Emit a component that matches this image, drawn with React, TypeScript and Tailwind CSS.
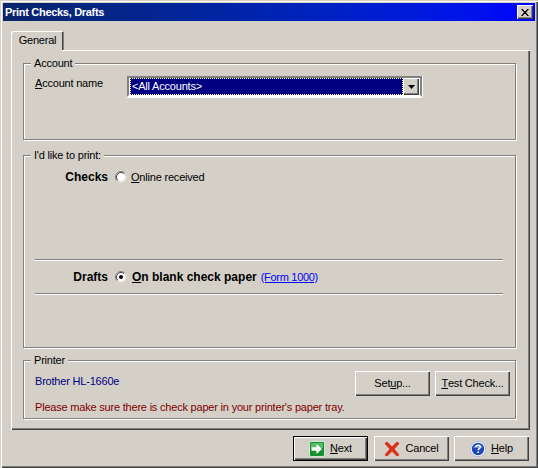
const sans = "font-['Liberation_Sans',Arial,sans-serif]";

const GroupBox = ({ label, className, children }: { label: string; className: string; children?: React.ReactNode }) => (
    <div className={`relative border border-[#808080] shadow-[inset_1px_1px_0_#fff,1px_1px_0_#fff] ${className}`}>
        <span className="absolute left-[7px] top-[-8px] bg-[#d4d0c8] px-[3px] leading-[14px] text-black">{label}</span>
        {children}
    </div>
);

const Etched = () => <div className="h-[1px] bg-[#808080] shadow-[0_1px_0_#fff]" />;

const Radio = ({ checked }: { checked?: boolean }) => (
    <svg width="12" height="12" viewBox="0 0 12 12" className="shrink-0">
        <circle cx="6" cy="6" r="5.5" fill="#ffffff" />
        <path d="M2.1 9.9 A5.5 5.5 0 0 1 9.9 2.1" fill="none" stroke="#808080" strokeWidth="1" />
        <path d="M2.8 9.2 A4.5 4.5 0 0 1 9.2 2.8" fill="none" stroke="#404040" strokeWidth="1" />
        <path d="M3 10 A5 5 0 0 0 10 3" fill="none" stroke="#d4d0c8" strokeWidth="1" />
        {checked && <circle cx="6" cy="6" r="2" fill="#000000" />}
    </svg>
);

const Button = ({ className, children, isDefault }: { className: string; children: React.ReactNode; isDefault?: boolean }) => (
    <div className={`flex items-center justify-center bg-[#d4d0c8] text-black ${isDefault ? 'border border-black shadow-[inset_1px_1px_0_#fff,inset_-1px_-1px_0_#404040,inset_-2px_-2px_0_#808080]' : 'shadow-[inset_1px_1px_0_#fff,inset_-1px_-1px_0_#404040,inset_-2px_-2px_0_#808080]'} ${className}`}>
        {children}
    </div>
);

const NextIcon = () => (
    <svg width="16" height="16" viewBox="0 0 16 16">
        <rect x="0.5" y="0.5" width="15" height="15" rx="1.5" fill="#14902c" stroke="#cfe8d2" />
        <rect x="2" y="2" width="12" height="5" fill="#5cb86c" />
        <path d="M2.5 6.2h5V3l5.5 5-5.5 5V9.8h-5z" fill="#ffffff" />
    </svg>
);

const CancelIcon = () => (
    <svg width="16" height="16" viewBox="0 0 16 16">
        <path d="M0.5 2.5 3 0.5 8 5.5 13 0.5 15.5 2.5 10.5 8 15.5 14 13 15.5 8 10.5 3 15.5 0.5 14 5.5 8z" fill="#d9301c" />
    </svg>
);

const HelpIcon = () => (
    <svg width="16" height="16" viewBox="0 0 16 16">
        <circle cx="8" cy="8" r="7.6" fill="#ffffff" stroke="#9fb4e6" strokeWidth="0.8" />
        <circle cx="8" cy="8" r="6.2" fill="#1e46b4" />
        <path d="M3.2 7a5 5 0 0 1 9.6 0z" fill="#5f86e0" />
        <path d="M5.8 6.2c.2-1.4 1.2-2 2.3-2 1.3 0 2.2.8 2.2 1.8 0 1.6-2.1 1.6-2.1 3.3" fill="none" stroke="#ffffff" strokeWidth="1.5" />
        <rect x="7.3" y="10.4" width="1.6" height="1.6" fill="#ffffff" />
    </svg>
);

const App = () => {
    return (
        <div className={`flex h-[468px] w-[538px] flex-col overflow-hidden bg-[#d4d0c8] text-[11px] tracking-[-0.2px] text-black shadow-[inset_1px_1px_0_#d4d0c8,inset_2px_2px_0_#fff,inset_-1px_-1px_0_#404040,inset_-2px_-2px_0_#808080] ${sans}`}>
            {/* title bar */}
            <div className="mx-[3px] mt-[3px] flex h-[18px] shrink-0 items-center justify-between bg-gradient-to-r from-[#0a246a] to-[#0000ff] pl-[2px] pr-[2px]">
                <span className="text-[11px] font-bold tracking-[-0.3px] text-white">Print Checks, Drafts</span>
                <div className="flex h-[14px] w-[16px] items-center justify-center bg-[#d4d0c8] shadow-[inset_1px_1px_0_#fff,inset_-1px_-1px_0_#404040,inset_-2px_-2px_0_#808080]">
                    <svg width="8" height="7" viewBox="0 0 8 7"><path d="M0 0h2v1h1v1h2V1h1V0h2L5 3.5 8 7H6V6H5V5H3v1H2v1H0l3-3.5z" fill="#000" /></svg>
                </div>
            </div>

            {/* tab strip */}
            <div className="ml-[11px] mt-[10px] flex h-[19px] shrink-0">
                <div className="flex w-[53px] items-center justify-center rounded-t-[2px] bg-[#d4d0c8] shadow-[inset_1px_1px_0_#fff,inset_-1px_0_0_#808080,inset_-2px_0_0_#404040]">General</div>
            </div>

            {/* tab page */}
            <div className="relative ml-[11px] mr-[8px] h-[380px] shrink-0 px-[12px] pt-[13px] shadow-[inset_1px_1px_0_#fff,inset_-1px_-1px_0_#404040,inset_-2px_-2px_0_#808080]">
                <div className="absolute left-[1px] top-0 h-[1px] w-[50px] bg-[#d4d0c8]" />
                <GroupBox label="Account" className="mr-[2px] h-[77px] shrink-0">
                    <div className="flex pl-[11px] pt-[12px]">
                        <span className="w-[92px] leading-[14px]"><u>A</u>ccount name</span>
                        <div className="flex h-[21px] w-[295px] items-center border-[2px] border-t-[#808080] border-l-[#808080] border-r-[#808080] border-b-white bg-white p-px shadow-[1px_0_0_#fff,0_1px_0_#fff]">
                            <div className="flex h-[17px] flex-1 items-center border border-dotted border-[#ffffc0] bg-[#000080] px-[1px] text-white">&lt;All Accounts&gt;</div>
                            <div className="flex h-[17px] w-[16px] items-center justify-center bg-[#d4d0c8] shadow-[inset_1px_1px_0_#fff,inset_-1px_-1px_0_#404040,inset_-2px_-2px_0_#808080]">
                                <svg width="7" height="4" viewBox="0 0 7 4"><path d="M0 0h7L3.5 4z" fill="#000" /></svg>
                            </div>
                        </div>
                    </div>
                </GroupBox>

                <GroupBox label="I'd like to print:" className="mr-[2px] mt-[15px] h-[193px]">
                    <div className="flex flex-col pl-[11px] pr-[12px]">
                        <div className="mt-[14px] flex h-[14px] items-center">
                            <span className="w-[73px] text-right text-[12px] font-bold tracking-normal">Checks</span>
                            <span className="ml-[7px]"><Radio /></span>
                            <span className="ml-[4px]"><u>O</u>nline received</span>
                        </div>
                        <div className="mt-[75px]"><Etched /></div>
                        <div className="mt-[10px] flex h-[14px] items-center">
                            <span className="w-[73px] text-right text-[12px] font-bold tracking-normal">Drafts</span>
                            <span className="ml-[7px]"><Radio checked /></span>
                            <span className="ml-[5px] text-[12px] font-bold tracking-normal"><u>O</u>n blank check paper</span>
                            <span className="ml-[4px] tracking-[-0.3px] text-[#0000ff] underline">(Form 1000)</span>
                        </div>
                        <div className="mt-[9px]"><Etched /></div>
                    </div>
                </GroupBox>

                <GroupBox label="Printer" className="mr-[2px] mt-[12px] h-[59px]">
                    <div className="flex items-start justify-between pl-[11px] pr-[5px] pt-[10px]">
                        <span className="mt-[2px] text-[#000080]">Brother HL-1660e</span>
                        <div className="flex gap-[5px]">
                            <Button className="h-[25px] w-[75px]">Set<u>u</u>p...</Button>
                            <Button className="h-[25px] w-[75px]"><u>T</u>est Check...</Button>
                        </div>
                    </div>
                    <div className="mt-[3px] pl-[11px] text-[#800000]">Please make sure there is check paper in your printer's paper tray.</div>
                </GroupBox>
            </div>

            {/* dialog buttons */}
            <div className="mr-[9px] mt-[6px] flex justify-end">
                <Button isDefault className="h-[25px] w-[75px] gap-[5px]"><NextIcon /><span><u>N</u>ext</span></Button>
                <Button className="ml-[6px] h-[25px] w-[75px] gap-[5px]"><CancelIcon /><span>Cancel</span></Button>
                <Button className="ml-[5px] h-[25px] w-[75px] gap-[5px]"><HelpIcon /><span><u>H</u>elp</span></Button>
            </div>
        </div>
    );
};

export default App;
